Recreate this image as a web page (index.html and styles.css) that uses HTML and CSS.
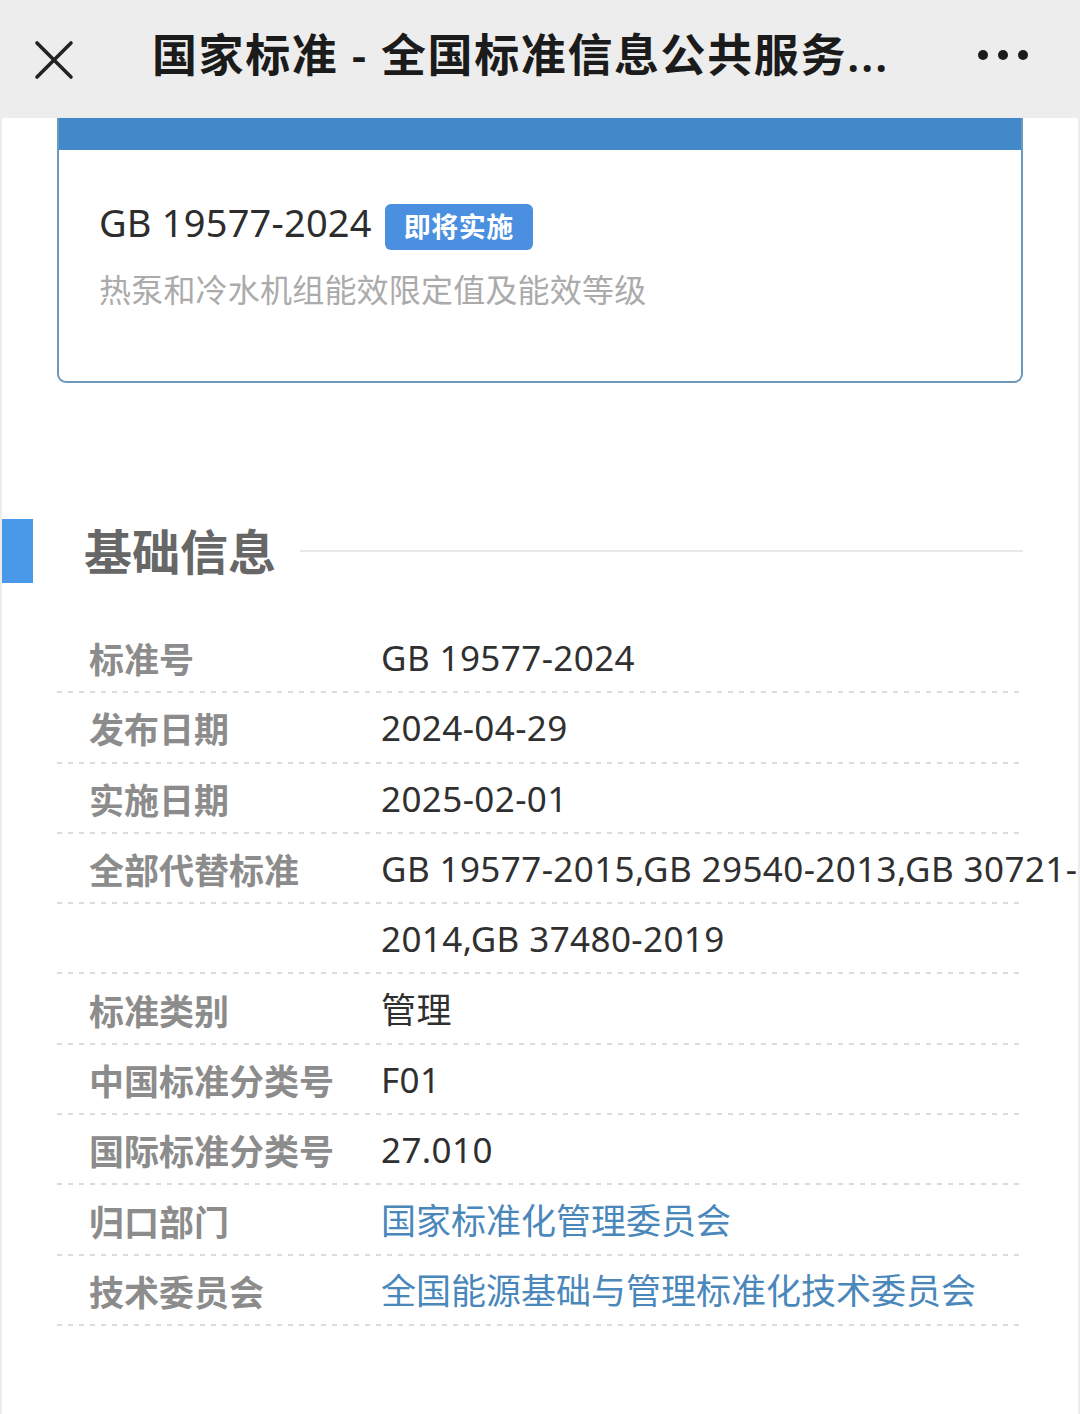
FILE: index.html
```html
<!DOCTYPE html>
<html lang="zh-CN">
<head>
<meta charset="utf-8">
<title>国家标准 - 全国标准信息公共服务平台</title>
<link rel="stylesheet" href="styles.css">
</head>
<body>
<div class="topbar">
  <svg class="close" width="40" height="40" viewBox="0 0 40 40"><path d="M3 3 L37 37 M37 3 L3 37" stroke="#222" stroke-width="3.6" stroke-linecap="round" fill="none"/></svg>
  <div class="title">国家标准 - 全国标准信息公共服务...</div>
  <div class="more"><span></span><span></span><span></span></div>
</div>
<div class="page">
  <div class="card">
    <div class="card-top"></div>
    <div class="card-body">
      <div class="code-row">
        <span class="code">GB 19577-2024</span>
        <span class="badge">即将实施</span>
      </div>
      <div class="subtitle">热泵和冷水机组能效限定值及能效等级</div>
    </div>
  </div>

  <div class="section-head">
    <div class="section-bar"></div>
    <div class="section-title">基础信息</div>
    <div class="section-line"></div>
  </div>

  <div class="rows">
    <div class="row"><div class="label">标准号</div><div class="value">GB 19577-2024</div></div>
    <div class="row"><div class="label">发布日期</div><div class="value">2024-04-29</div></div>
    <div class="row"><div class="label">实施日期</div><div class="value">2025-02-01</div></div>
    <div class="row"><div class="label">全部代替标准</div><div class="value">GB 19577-2015,GB 29540-2013,GB 30721-</div></div>
    <div class="row"><div class="label"></div><div class="value">2014,GB 37480-2019</div></div>
    <div class="row"><div class="label">标准类别</div><div class="value">管理</div></div>
    <div class="row"><div class="label">中国标准分类号</div><div class="value">F01</div></div>
    <div class="row"><div class="label">国际标准分类号</div><div class="value">27.010</div></div>
    <div class="row"><div class="label">归口部门</div><div class="value link">国家标准化管理委员会</div></div>
    <div class="row"><div class="label">技术委员会</div><div class="value link">全国能源基础与管理标准化技术委员会</div></div>
  </div>
</div>
</body>
</html>
```
FILE: styles.css
```css
html, body {
  margin: 0;
  padding: 0;
}
body {
  width: 1080px;
  height: 1414px;
  overflow: hidden;
  background: #ffffff;
  font-family: "Noto Sans", "Noto Sans CJK SC", sans-serif;
}
.topbar {
  height: 118px;
  background: #ededed;
  display: flex;
  align-items: center;
  position: relative;
}
.close {
  margin-left: 34px;
  margin-top: 2px;
  width: 40px;
  height: 40px;
  flex: none;
}
.title {
  margin-left: 78px;
  font-size: 45px;
  font-weight: 600;
  color: #1b1b1b;
  letter-spacing: 1.6px;
  white-space: nowrap;
  line-height: 60px;
  margin-top: -8px;
}
.more {
  margin-left: auto;
  margin-right: 52px;
  display: flex;
  gap: 10px;
  margin-top: -8px;
}
.more span {
  width: 10px;
  height: 10px;
  border-radius: 50%;
  background: #1b1b1b;
}
.page {
  min-height: 1296px;
  border-left: 2px solid #ececec;
  border-right: 2px solid #ececec;
  background: #ffffff;
}
.card {
  margin-left: 55px;
  width: 966px;
  box-sizing: border-box;
  border: 2px solid #6b98bd;
  border-top: none;
  border-radius: 0 0 9px 9px;
  overflow: hidden;
}
.card-top {
  height: 32px;
  background: #4289c9;
}
.card-body {
  padding: 52px 40px 71px 40px;
}
.code-row {
  display: flex;
  align-items: center;
  height: 50px;
}
.code {
  font-size: 38px;
  color: #2d2d2d;
  line-height: 50px;
  margin-top: -10px;
  letter-spacing: 0.2px;
}
.badge {
  margin-left: 13px;
  height: 46px;
  padding: 0 19px;
  background: #4a8fe0;
  color: #ffffff;
  font-family: "Noto Sans CJK SC", sans-serif;
  font-weight: 700;
  font-size: 27px;
  line-height: 44px;
  border-radius: 6px;
  letter-spacing: 0.5px;
}
.subtitle {
  margin-top: 14px;
  font-family: "Noto Sans CJK SC", sans-serif;
  font-size: 32px;
  line-height: 44px;
  color: #ababab;
  letter-spacing: 0.2px;
}
.section-head {
  margin-top: 136px;
  height: 64px;
  display: flex;
  align-items: center;
}
.section-bar {
  width: 31px;
  height: 64px;
  background: #4a98e8;
  flex: none;
}
.section-title {
  margin-left: 51px;
  font-family: "Noto Sans CJK SC", sans-serif;
  font-size: 48px;
  font-weight: 700;
  color: #676767;
  line-height: 64px;
  margin-top: -4px;
}
.section-line {
  margin-left: 24px;
  margin-right: 55px;
  flex: 1;
  height: 2px;
  background: #e8e8e8;
}
.rows {
  margin-top: 40px;
  margin-left: 55px;
  width: 966px;
}
.row {
  height: 70.3px;
  box-sizing: border-box;
  display: flex;
  align-items: center;
  background-image: linear-gradient(to right, #dcdcdc 0 5px, transparent 5px 11px);
  background-size: 11px 2px;
  background-repeat: repeat-x;
  background-position: left bottom;
  white-space: nowrap;
}
.label {
  width: 292px;
  padding-left: 32px;
  flex: none;
  font-family: "Noto Sans CJK SC", sans-serif;
  font-size: 35px;
  font-weight: 700;
  color: #8c8c8c;
  line-height: 50px;
}
.value {
  font-size: 35px;
  color: #303030;
  line-height: 50px;
  letter-spacing: 0.4px;
}
.value.link {
  color: #4a87bb;
  letter-spacing: 0;
}
```
